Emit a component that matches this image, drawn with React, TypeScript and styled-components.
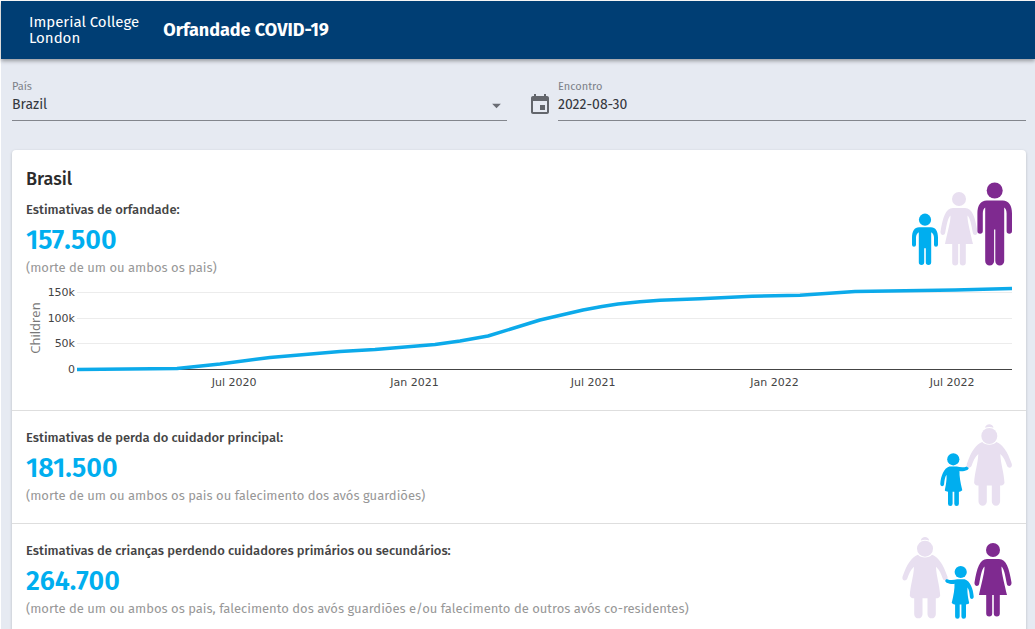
import React from 'react';
import styled, { createGlobalStyle } from 'styled-components';

const BLUE = '#00aeef';
const PURPLE = '#7f2a90';
const LILAC = '#e8dff0';

const GlobalStyle = createGlobalStyle`
  *, *::before, *::after { box-sizing: border-box; }
  html { scrollbar-width: none; background: #fff; }
  body {
    margin: 0;
    padding: 1px 0 0 1px;
    font-family: 'Fira Sans', Roboto, 'Noto Sans', sans-serif;
    color: #2b2b2b;
  }
`;

const Page = styled.div`
  min-height: 100vh;
  background: #e6eaf2;
`;

const Header = styled.header`
  display: flex;
  align-items: center;
  gap: 24px;
  height: 58px;
  padding: 0 28px;
  background: #003e74;
  color: #fff;
  position: relative;
  box-shadow: 0 2px 4px rgba(0, 0, 0, 0.35);
`;

const Logo = styled.a`
  color: inherit;
  text-decoration: none;
  font-size: 15px;
  font-weight: 400;
  line-height: 16px;
  white-space: nowrap;
`;

const Title = styled.h1`
  margin: 0;
  font-size: 18px;
  line-height: 24px;
  font-weight: 700;
`;

const Main = styled.main`
  padding: 21px 9px 16px 11px;
`;

const Filters = styled.form`
  display: flex;
  gap: 24px;
  margin-bottom: 29px;
`;

const Field = styled.div`
  flex: 1;
  display: flex;
  align-items: flex-end;
  gap: 9px;
  min-width: 0;
`;

const FieldBody = styled.div`
  flex: 1;
  min-width: 0;
  display: grid;
  border-bottom: 1px solid #83868d;
`;

const FieldLabel = styled.label`
  font-size: 11px;
  line-height: 14px;
  color: #7c8088;
`;

const ControlRow = styled.div`
  display: flex;
  align-items: center;
  height: 26px;
  padding-bottom: 4px;
`;

const Select = styled.select`
  flex: 1;
  appearance: none;
  border: 0;
  padding: 0;
  background: transparent;
  color: #33363c;
  font: inherit;
  font-size: 14px;
  line-height: 20px;
  outline: 0;
`;

const TextInput = styled.input`
  flex: 1;
  min-width: 0;
  border: 0;
  padding: 0;
  background: transparent;
  color: #33363c;
  font: inherit;
  font-size: 14px;
  line-height: 20px;
  outline: 0;
`;

const Arrow = styled.svg`
  width: 21px;
  height: 21px;
  fill: #6a6d74;
  pointer-events: none;
`;

const CalendarSvg = styled.svg`
  width: 18px;
  height: 20px;
  margin-bottom: 7px;
  fill: #63666c;
`;

const Card = styled.article`
  background: #fff;
  border-radius: 4px;
  box-shadow: 0 1px 3px rgba(0, 0, 0, 0.2);
`;

const Section = styled.section`
  padding: 14px 14px 16px;
  & + & { border-top: 1px solid #dedede; }
`;

const Row = styled.div`
  display: flex;
  justify-content: space-between;
  align-items: center;
`;

const Country = styled.h2`
  margin: 4px 0 9px;
  font-size: 18px;
  line-height: 22px;
  font-weight: 500;
`;

const StatLabel = styled.h3`
  margin: 0;
  font-size: 13px;
  line-height: 22px;
  font-weight: 500;
  color: #444;
`;

const StatValue = styled.p`
  margin: 0;
  font-size: 27px;
  line-height: 38px;
  font-weight: 600;
  color: ${BLUE};
`;

const StatNote = styled.p`
  margin: 0;
  font-size: 13px;
  line-height: 18px;
  color: #979797;
`;

const Figures = styled.svg`
  flex: none;
  display: block;
`;

const ChartBox = styled.div`
  display: flex;
  height: 112px;
  margin-top: 5px;
`;

const YAxis = styled.svg`
  flex: none;
  width: 51px;
  height: 112px;
`;

const Plot = styled.svg`
  flex: 1;
  min-width: 0;
  height: 112px;
  overflow: visible;
`;

const TickText = styled.text`
  font-family: 'DejaVu Sans', sans-serif;
  font-size: 11px;
  fill: #444;
`;

const AxisTitle = styled.text`
  font-family: 'Open Sans', sans-serif;
  font-size: 13px;
  fill: #777;
`;

type FigureProps = { x: number; y: number; color: string; flip?: boolean };

const place = ({ x, y, flip }: FigureProps) =>
  `translate(${x} ${y})${flip ? ' scale(-1 1)' : ''}`;

const Man = (p: FigureProps) => (
  <g transform={place(p)} fill={p.color}>
    <circle r="8" />
    <path d="M-8 10H8C14 10 17.300 15 17.300 23V40.500a2.700 2.700 0 0 1-5.400 0V23C11.900 20 11 18 9.500 17V70.500a4.200 4.200 0 0 1-8.900 0V39H-.6V70.500a4.200 4.200 0 0 1-8.900 0V17C-11 18-11.900 20-11.900 23V40.500a2.700 2.700 0 0 1-5.400 0V23C-17.300 15-14 10-8 10Z" />
  </g>
);

const Boy = (p: FigureProps) => (
  <g transform={place(p)} fill={p.color}>
    <circle r="6.100" />
    <path d="M-6 7.500H6C10.500 7.500 13 11.500 13 18V25a2 2 0 0 1-4 0V18C9 15.500 8 13.500 6.200 12.500V42.500a2.700 2.700 0 0 1-5.400 0V28.500H-.8V42.500a2.700 2.700 0 0 1-5.400 0V12.500C-8 13.500-9 15.500-9 18V25a2 2 0 0 1-4 0V18C-13 11.500-10.500 7.500-6 7.500Z" />
  </g>
);

const Woman = (p: FigureProps) => (
  <g transform={place(p)} fill={p.color}>
    <circle r="7" />
    <path d="M-6 9H6C13.500 9.500 16 18 18.500 32.500C19 36.500 14.500 37.200 13.800 33.800C12.500 27 11.500 19.500 8.500 16.500C8.500 22 9.500 25 14 45H6.800V63.500a3 3 0 0 1-6 0V45H-.8V63.500a3 3 0 0 1-6 0V45H-14C-9.500 25-8.500 22-8.500 16.500C-11.500 19.500-12.500 27-13.800 33.800C-14.500 37.200-19 36.500-18.500 32.500C-16 18-13.500 9.500-6 9Z" />
  </g>
);

const Girl = (p: FigureProps) => (
  <g transform={place(p)} fill={p.color}>
    <circle r="6.100" />
    <path d="M-4 7.300H3.500C6.500 7.800 9.500 8.800 13.500 7.200C15.800 7 16 9.700 14 10.700C11 12 8.500 12.200 6.200 11.800C6 17 7 23 9 31C7.500 32.400 6.500 32.400 5.600 32.400V44.500a2.300 2.300 0 0 1-4.600 0V32.400H-.7V44.500a2.300 2.300 0 0 1-4.600 0V32.400C-6.500 32.400-8 32-8.500 31C-7 24-6.500 20-6.800 15.500C-8.500 18-8.800 21-9.200 25C-9.600 27.800-13.200 27.500-13 24.500C-12.500 17-9.500 9-4 7.300Z" />
  </g>
);

const Grandmother = (p: FigureProps) => (
  <g transform={place(p)} fill={p.color}>
    <path d="M-4.200-8.300C-3.800-13 3.800-13 4.200-8.300C1.500-9.300-1.500-9.300-4.200-8.300Z" />
    <circle r="8" />
    <path d="M-7 6C-4 9.700 4 9.700 7 6C13 8 18 15 22.500 28C23.500 31.500 19.500 33.200 17.800 30C16 25 14.500 21 11 18C11.500 29 14.500 35 15.200 47C14 49.500 12.500 49.500 10.800 49.500V65.500a4.100 4.100 0 0 1-8.300 0V49.500H-2.500V65.500a4.100 4.100 0 0 1-8.300 0V49.500C-12.500 49.500-14 49.500-15.200 47C-14.500 35-11.500 29-11 18C-14.500 21-16 25-17.800 30C-19.500 33.200-23.500 31.500-22.500 28C-18 15-13 8-7 6Z" />
  </g>
);

const POINTS: [number, number][] = [
  [0, 87.5], [100, 86.5], [143, 82], [193, 75.5], [263, 69.5], [298, 67.5],
  [358, 62.5], [383, 59], [411, 54], [463, 38], [506, 28], [525, 24.5],
  [541, 22], [563, 19.8], [583, 18.3], [623, 16.7], [675, 14.3], [723, 13.3],
  [778, 9.5], [828, 8.7], [878, 8], [935, 6.5],
];

const Y_TICKS = [
  { label: '150k', y: 10 },
  { label: '100k', y: 36 },
  { label: '50k', y: 61 },
];

const X_TICKS = [
  { label: 'Jul 2020', x: '16.8%' },
  { label: 'Jan 2021', x: '36.1%' },
  { label: 'Jul 2021', x: '55.2%' },
  { label: 'Jan 2022', x: '74.6%' },
  { label: 'Jul 2022', x: '93.6%' },
];

const Chart = () => (
  <ChartBox>
    <YAxis aria-hidden="true">
      <AxisTitle transform="translate(14 46) rotate(-90)" textAnchor="middle">Children</AxisTitle>
      {[...Y_TICKS, { label: '0', y: 87 }].map((t) => (
        <TickText key={t.label} x="49" y={t.y + 4} textAnchor="end">{t.label}</TickText>
      ))}
    </YAxis>
    <Plot role="img" aria-label="Children">
      {Y_TICKS.map((t) => (
        <rect key={t.label} x="0" y={t.y} width="100%" height="1" fill="#ececec" />
      ))}
      <rect x="0" y="87" width="100%" height="1" fill="#444" />
      <svg width="100%" height="112" viewBox="0 0 935 112" preserveAspectRatio="none" overflow="visible">
        <polyline
          points={POINTS.map((p) => p.join(',')).join(' ')}
          fill="none"
          stroke="#0caaea"
          strokeWidth="3.500"
          strokeLinejoin="round"
          vectorEffect="non-scaling-stroke"
        />
      </svg>
      {X_TICKS.map((t) => (
        <TickText key={t.label} x={t.x} y="104" textAnchor="middle">{t.label}</TickText>
      ))}
    </Plot>
  </ChartBox>
);

type StatProps = { label: string; value: string; note: string };

const Stat = ({ label, value, note }: StatProps) => (
  <>
    <StatLabel>{label}</StatLabel>
    <StatValue>{value}</StatValue>
    <StatNote>{note}</StatNote>
  </>
);

export default function App() {
  return (
    <>
      <GlobalStyle />
      <Page>
        <Header>
          <Logo href="#">Imperial College<br />London</Logo>
          <Title>Orfandade COVID-19</Title>
        </Header>
        <Main>
          <Filters>
            <Field>
              <FieldBody>
                <FieldLabel htmlFor="country">País</FieldLabel>
                <ControlRow>
                  <Select id="country" defaultValue="Brazil">
                    <option>Brazil</option>
                  </Select>
                  <Arrow viewBox="0 0 24 24" aria-hidden="true"><path d="M7 10l5 5 5-5z" /></Arrow>
                </ControlRow>
              </FieldBody>
            </Field>
            <Field>
              <CalendarSvg viewBox="3 1 18 20" aria-hidden="true">
                <path d="M17 12h-5v5h5v-5zM16 1v2H8V1H6v2H5c-1.110 0-1.990.9-1.990 2L3 19c0 1.100.89 2 2 2h14c1.100 0 2-.9 2-2V5c0-1.100-.9-2-2-2h-1V1h-2zm3 18H5V8h14v11z" />
              </CalendarSvg>
              <FieldBody>
                <FieldLabel htmlFor="date">Encontro</FieldLabel>
                <ControlRow>
                  <TextInput id="date" type="text" defaultValue="2022-08-30" />
                </ControlRow>
              </FieldBody>
            </Field>
          </Filters>
          <Card>
            <Section>
              <Row>
                <div>
                  <Country>Brasil</Country>
                  <Stat
                    label="Estimativas de orfandade:"
                    value="157.500"
                    note="(morte de um ou ambos os pais)"
                  />
                </div>
                <Figures width="104" height="113" viewBox="908 164 104 113" aria-hidden="true">
                  <Boy x={925} y={219.7} color={BLUE} />
                  <Woman x={959} y={199} color={LILAC} />
                  <Man x={994.7} y={190.5} color={PURPLE} />
                </Figures>
              </Row>
              <Chart />
            </Section>
            <Section>
              <Row>
                <div>
                  <Stat
                    label="Estimativas de perda do cuidador principal:"
                    value="181.500"
                    note="(morte de um ou ambos os pais ou falecimento dos avós guardiões)"
                  />
                </div>
                <Figures width="74" height="82" viewBox="938 425 74 82" overflow="visible" aria-hidden="true">
                  <Girl x={953.3} y={459.3} color={BLUE} />
                  <Grandmother x={989.3} y={436} color={LILAC} />
                </Figures>
              </Row>
            </Section>
            <Section>
              <Row>
                <div>
                  <Stat
                    label="Estimativas de crianças perdendo cuidadores primários ou secundários:"
                    value="264.700"
                    note="(morte de um ou ambos os pais, falecimento dos avós guardiões e/ou falecimento de outros avós co-residentes)"
                  />
                </div>
                <Figures width="112" height="82" viewBox="900 538 112 82" overflow="visible" aria-hidden="true">
                  <Grandmother x={925} y={548.7} color={LILAC} />
                  <Girl x={960.7} y={572} color={BLUE} flip />
                  <Woman x={993} y={550} color={PURPLE} />
                </Figures>
              </Row>
            </Section>
          </Card>
        </Main>
      </Page>
    </>
  );
}
